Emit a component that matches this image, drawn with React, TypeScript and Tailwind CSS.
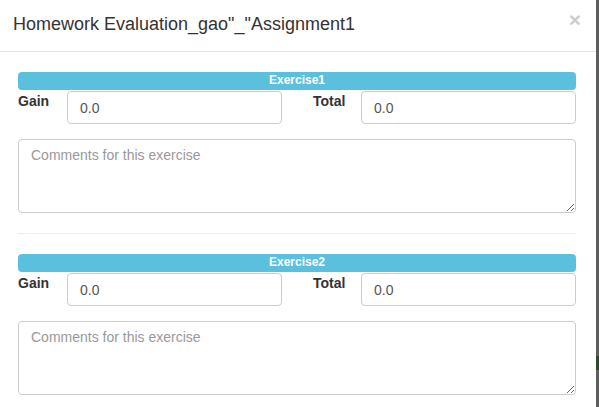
const exercises = ['Exercise1', 'Exercise2'];

function ExerciseBlock({ name, last }: { name: string; last: boolean }) {
  return (
    <div>
      <div className="h-[18px] rounded-[4px] bg-[#5bc0de] text-center text-[12px] font-bold leading-[16px] text-white">
        {name}
      </div>
      <div className="mt-px flex items-start">
        <label className="w-[49px] text-[14px] font-bold leading-[20px] text-[#333]">Gain</label>
        <input
          type="text"
          defaultValue="0.0"
          className="h-[33px] w-[215px] rounded-[4px] border border-[#ccc] px-3 text-[14px] text-[#555] outline-none"
        />
        <div className="w-[31px]" />
        <label className="w-[48px] text-[14px] font-bold leading-[20px] text-[#333]">Total</label>
        <input
          type="text"
          defaultValue="0.0"
          className="h-[33px] flex-1 rounded-[4px] border border-[#ccc] px-3 text-[14px] text-[#555] outline-none"
        />
      </div>
      <textarea
        placeholder="Comments for this exercise"
        className="mt-[15px] block h-[74px] w-full rounded-[4px] border border-[#ccc] px-3 py-[5px] text-[14px] leading-[20px] text-[#555] outline-none placeholder:text-[#999]"
      />
      {!last && <div className="mt-[20px] mb-[20px] h-px bg-[#eee]" />}
    </div>
  );
}

export default function App() {
  return (
    <div className="flex h-[407px] w-[599px] overflow-hidden font-['Liberation_Sans',Arial,sans-serif]">
      <div className="flex-1 bg-white">
        <div className="flex h-[52px] items-start justify-between border-b border-[#e5e5e5] pl-[13px] pr-[15px] pt-[11px]">
          <h4 className="text-[18px] leading-[26px] text-[#333]">Homework Evaluation_gao"_"Assignment1</h4>
          <button className="text-[21px] font-bold leading-[18px] text-black opacity-20">×</button>
        </div>
        <div className="pl-[18px] pr-[20px] pt-[20px]">
          {exercises.map((ex, i) => (
            <ExerciseBlock key={ex} name={ex} last={i === exercises.length - 1} />
          ))}
        </div>
      </div>
      <div className="flex w-[3px] flex-col bg-[#5e5e5e]">
        <div className="h-[356px]" />
        <div className="h-[14px] bg-[#2e4a2c]" />
      </div>
    </div>
  );
}
